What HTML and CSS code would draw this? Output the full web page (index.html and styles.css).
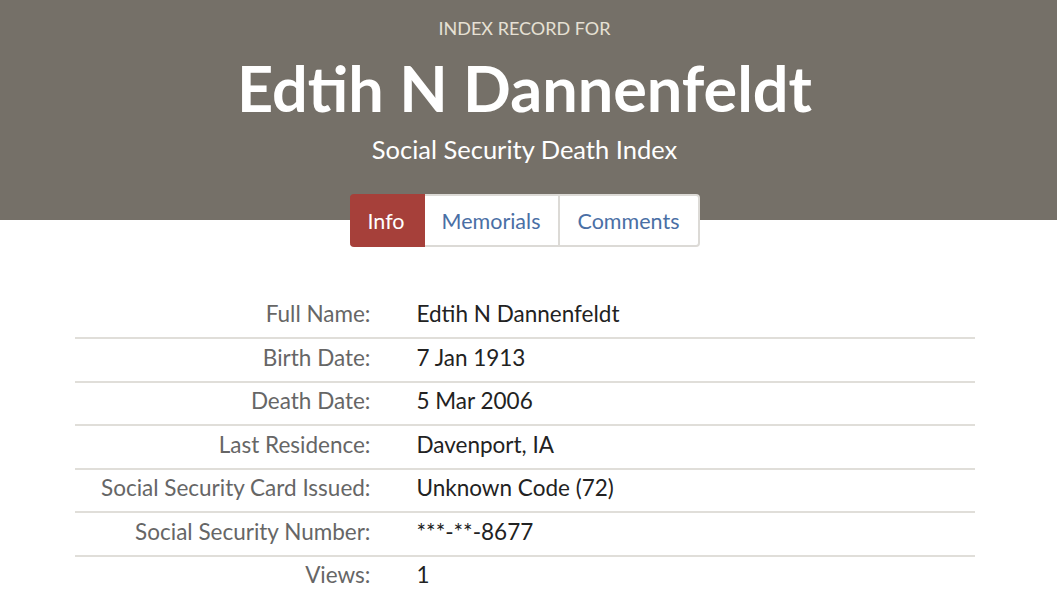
FILE: index.html
```html
<!DOCTYPE html>
<html lang="en">
<head>
<meta charset="utf-8">
<title>Edtih N Dannenfeldt - Social Security Death Index</title>
<link rel="stylesheet" href="styles.css">
</head>
<body>
<header class="hero">
  <div class="kicker">INDEX RECORD FOR</div>
  <h1 class="title">Edtih N Dannenfeldt</h1>
  <div class="subtitle">Social Security Death Index</div>
</header>
<main class="content">
  <nav class="tabs">
    <a class="tab active">Info</a>
    <a class="tab">Memorials</a>
    <a class="tab">Comments</a>
  </nav>
  <section class="record">
    <div class="row"><div class="label">Full Name:</div><div class="value">Edtih N Dannenfeldt</div></div>
    <div class="row"><div class="label">Birth Date:</div><div class="value">7 Jan 1913</div></div>
    <div class="row"><div class="label">Death Date:</div><div class="value">5 Mar 2006</div></div>
    <div class="row"><div class="label">Last Residence:</div><div class="value">Davenport, IA</div></div>
    <div class="row"><div class="label">Social Security Card Issued:</div><div class="value">Unknown Code (72)</div></div>
    <div class="row"><div class="label">Social Security Number:</div><div class="value">***-**-8677</div></div>
    <div class="row"><div class="label">Views:</div><div class="value">1</div></div>
  </section>
</main>
</body>
</html>
```

FILE: styles.css
```css
* { box-sizing: border-box; }
body {
  margin: 0;
  font-family: Lato, "Noto Sans", sans-serif;
  background: #fff;
  color: #222;
}
.hero {
  background: #757068;
  height: 220px;
  padding: 16px 8px 0 0;
  text-align: center;
  color: #fff;
}
.kicker {
  font-size: 18px;
  color: #e6e0d4;
  line-height: 24px;
}
.title {
  margin: 8px 0 0;
  font-size: 63px;
  font-weight: 700;
  line-height: 80px;
}
.subtitle {
  margin-top: 5px;
  font-size: 25.5px;
  line-height: 32px;
}
.content {
  padding-right: 8px;
}
.tabs {
  display: flex;
  justify-content: center;
  margin-top: -26px;
  height: 53px;
}
.tab {
  display: flex;
  align-items: center;
  justify-content: center;
  background: #fff;
  border: 2px solid #dcdad6;
  border-left-width: 0;
  color: #4a6fa5;
  font-size: 21.5px;
  padding: 0;
}
.tab:last-child { border-radius: 0 4px 4px 0; }
.tab.active {
  background: #a6403a;
  border-color: #a6403a;
  color: #fff;
  border-radius: 4px 0 0 4px;
  width: 75px;
}
.tab:nth-child(2) { width: 135px; }
.tab:nth-child(3) { width: 140px; }
.record {
  width: 900px;
  margin: 48.5px auto 0;
}
.row {
  display: flex;
  align-items: flex-start;
  height: 43.5px;
  padding-top: 3.5px;
  line-height: 30px;
  border-bottom: 2px solid #e0ded9;
  font-size: 22.5px;
}
.row:last-child { border-bottom: none; }
.label {
  width: 296px;
  text-align: right;
  color: #666;
}
.value {
  padding-left: 46px;
  color: #222;
}
```
